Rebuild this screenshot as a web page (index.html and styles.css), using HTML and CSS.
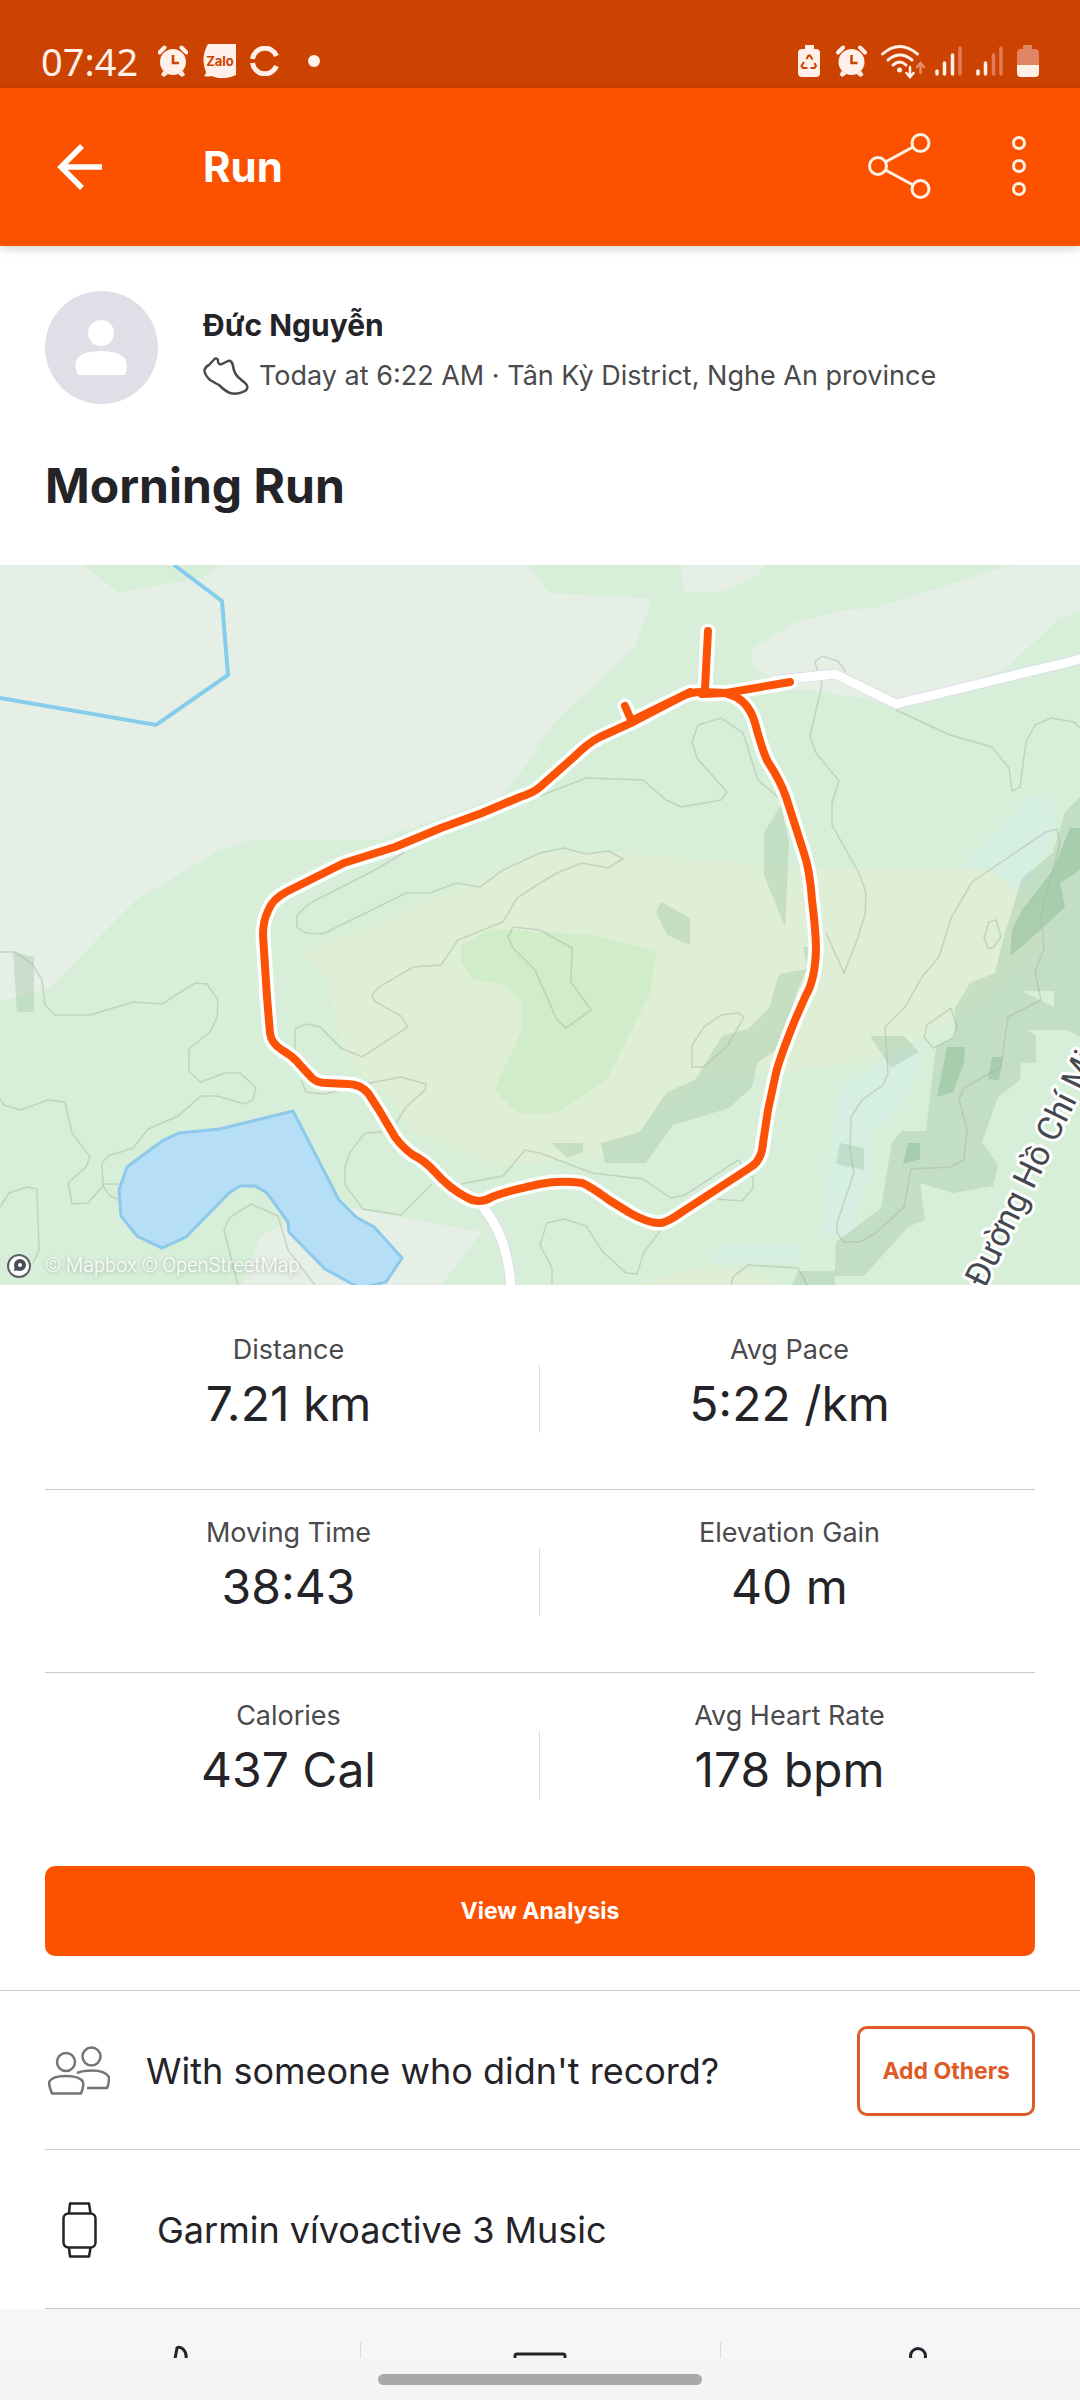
FILE: index.html
```html
<!DOCTYPE html>
<html lang="en">
<head>
    <meta charset="UTF-8">
    <meta name="viewport" content="width=device-width, initial-scale=1.0">
    <title>Morning Run</title>
    <link rel="stylesheet" href="styles.css">
</head>
<body>
    <div class="status-bar">
        <div class="status-group">
            <span class="clock">07:42</span>
            <svg width="30" height="32" viewBox="0 0 30 32">
                <g fill="#fff0ea">
                    <circle cx="15" cy="17" r="13"/>
                    <path d="M5 26l5 3-4 3-3-2zM25 26l-5 3 4 3 3-2z"/>
                </g>
                <path d="M1.500 7.500l5-5M28.500 7.500l-5-5" stroke="#fff0ea" stroke-width="4" stroke-linecap="round"/>
                <path d="M15 10v8h6" fill="none" stroke="#cc4200" stroke-width="2.5"/>
            </svg>
            <svg width="34" height="34" viewBox="0 0 34 34">
                <path d="M6 0h28v31q-14 6-24 1-4 1-8 0 2-2 2-4-6-14 2-28z" fill="#fff0ea"/>
                <text class="zalo" x="18" y="22" text-anchor="middle">Zalo</text>
            </svg>
            <svg width="30" height="30" viewBox="0 0 30 30" fill="none" stroke="#fff0ea" stroke-width="5">
                <path d="M2.500 13A12.500 12.500 0 0 1 26.500 10M2.500 17A12.500 12.500 0 0 0 26.500 20"/>
            </svg>
            <span class="status-dot"></span>
        </div>
        <div class="status-group">
            <svg width="24" height="32" viewBox="0 0 24 32">
                <path d="M7 0h9v4h2a4 4 0 0 1 4 4v20a4 4 0 0 1-4 4H4a4 4 0 0 1-4-4V8a4 4 0 0 1 4-4h3z" fill="#fff0ea"/>
                <path d="M8.500 14l2-3.500h1.500l2.500 4M16.500 18l1.500 3-1.500 2h-4M9.500 23H5l-1.500-2L6 17" fill="none" stroke="#cc4200" stroke-width="2"/>
            </svg>
            <svg width="31" height="32" viewBox="0 0 30 32">
                <g fill="#fff0ea">
                    <circle cx="15" cy="17" r="13"/>
                    <path d="M5 26l5 3-4 3-3-2zM25 26l-5 3 4 3 3-2z"/>
                </g>
                <path d="M1.500 7.500l5-5M28.500 7.500l-5-5" stroke="#fff0ea" stroke-width="4" stroke-linecap="round"/>
                <path d="M15 10v8h6" fill="none" stroke="#cc4200" stroke-width="2.5"/>
            </svg>
            <svg class="wifi" width="40" height="34" viewBox="0 0 40 34" fill="none" stroke="#fff0ea" stroke-width="3" stroke-linecap="round">
                <path d="M1.500 10q17-15 35 0M7 16q12-10 24 0M12 21q7-6 13 0"/>
                <circle cx="18.5" cy="26" r="2.5" fill="#fff0ea" stroke="none"/>
                <path d="M29 23v9M25.500 29l3.500 4 3.500-4" stroke-width="2.5"/>
                <path d="M39.500 29v-9M36 23l3.500-4 3.500 4" stroke="#e88a68" stroke-width="2.5"/>
            </svg>
            <svg width="27" height="32" viewBox="0 0 27 32" stroke="#fff0ea" stroke-width="3.5" stroke-linecap="round">
                <path d="M2 26v3M9.500 18v11M17.500 10v19"/>
                <path d="M25 3v26" stroke="#e27b57"/>
            </svg>
            <svg width="27" height="32" viewBox="0 0 27 32" stroke="#fff0ea" stroke-width="3.5" stroke-linecap="round">
                <path d="M2 26v3M9.500 18v11"/>
                <path d="M17.500 10v19M25 3v26" stroke="#e27b57"/>
            </svg>
            <svg width="22" height="32" viewBox="0 0 22 32">
                <path d="M6 0h9v4h3a4 4 0 0 1 4 4v12H0V8a4 4 0 0 1 4-4h2z" fill="#e08464"/>
                <path d="M0 20h22v8a4 4 0 0 1-4 4H4a4 4 0 0 1-4-4z" fill="#fff0ea"/>
            </svg>
        </div>
    </div>

    <header class="app-bar">
        <button class="icon-button" aria-label="Back">
            <svg width="45" height="46" viewBox="0 0 45 46" fill="none" stroke="#fff" stroke-width="5.5">
                <path d="M45 23H4M25 2L4 23l21 21"/>
            </svg>
        </button>
        <h1>Run</h1>
        <button class="icon-button share" aria-label="Share">
            <svg width="64" height="68" viewBox="0 0 64 68" fill="none" stroke="#fff3e6" stroke-width="3">
                <circle cx="52.5" cy="10" r="8.5"/>
                <circle cx="10" cy="33" r="8.5"/>
                <circle cx="52.5" cy="56" r="8.5"/>
                <path d="M17.500 29L45 14M17.500 37L45 52"/>
            </svg>
        </button>
        <button class="icon-button" aria-label="More options">
            <svg width="16" height="68" viewBox="0 0 16 68" fill="none" stroke="#fff3e6" stroke-width="3">
                <circle cx="8" cy="10" r="5.5"/>
                <circle cx="8" cy="33" r="5.5"/>
                <circle cx="8" cy="56" r="5.5"/>
            </svg>
        </button>
    </header>

    <main>
        <section class="summary">
            <div class="athlete">
                <svg class="avatar" width="113" height="113" viewBox="0 0 113 113">
                    <circle cx="56.5" cy="56.5" r="56.5" fill="#dfdfe8"/>
                    <circle cx="56" cy="42" r="13" fill="#fff"/>
                    <path d="M33 84q-4-8-2-14 4-10 25-10t25 10q2 6-1 14z" fill="#fff"/>
                </svg>
                <div class="athlete-info">
                    <p class="name">Đức Nguyễn</p>
                    <p class="meta">
                        <svg width="46" height="38" viewBox="0 0 46 38" fill="none" stroke="#4a4a4d" stroke-width="2.5" stroke-linejoin="round">
                            <path d="M12 1.500Q15 1 15 4 15 8 19 7L25 4Q29 3 30 9 31 16 35 20L42 26Q47 30 42 34 35 38 27 36 22 34 16 28 12 26 7 23 1 17 1.500 13 3 9 6 8z"/>
                        </svg>
                        <span>Today at 6:22 AM · Tân Kỳ District, Nghe An province</span>
                    </p>
                </div>
            </div>
            <h2>Morning Run</h2>
        </section>

        <svg class="map" viewBox="0 0 1080 720" role="img" aria-label="Route map">
            <rect width="1080" height="720" fill="#d7efd9"/>
            <g fill="#e5efe6">
                <path d="M0 0H527L540 15 549 28 650 33 648 45 635 82 555 157 540 177 530 195 503 230 379 275H253L220 285 136 335 96 375 52 422 0 437z"/>
                <path d="M680 0L685 27H721L759 10 764 0z"/>
                <path d="M1012 0L874 43 845 45 797 57 752 83V100L767 110 793 123 864 133 895 138 1005 105 1057 55 1080 45V0z"/>
                <path d="M351 643L482 667 441 720H243L260 672 282 660z"/>
            </g>
            <path d="M83 0L119 28 203 12 220 0z" fill="#d7efd9"/>
            <g fill="#d6efe3">
                <path d="M1032 230L1053 235 1056 262 1022 328 988 308 960 302z"/>
                <path d="M840 522L884 498 922 475 912 522 898 545 867 572 870 608 850 668 821 670 833 572z"/>
                <path d="M724 678L803 680 798 698H709z"/>
            </g>
            <path d="M300 388L345 370 430 335 540 288H623L760 299 822 303H984L1022 328 1040 342 1050 372 981 438 922 473 870 495 822 503 781 507 702 510 626 578 602 592 540 597 496 602 413 567 389 532 358 508 341 478 325 412z" fill="#dfefd6"/>
            <path d="M626 720L712 700 760 708 781 720z" fill="#dfefd6"/>
            <path d="M489 364L592 370 656 387 650 428 607 515 557 548H517L494 525 521 467 522 437 504 420 473 414 461 398V381z" fill="#d1ecc8"/>

            <!-- hill shading -->
            <g fill="#a5c6a8" fill-opacity=".42">
                <path d="M13 387L34 392V447H17z"/>
                <path d="M781 240L764 268V310L785 362 789 278z"/>
                <path d="M661 337L656 347 667 370 690 380V353z"/>
                <path d="M803 382H809L806 398z"/>
                <path d="M779 409L807 404 797 427 779 483 757 498 752 522 729 543 673 560 646 598H605L601 578 640 567 667 527 695 515 722 471 748 464 769 443z"/>
                <path d="M551 578H583V587L568 593z"/>
                <path d="M870 471H904L919 487 891 503z"/>
                <path d="M840 578L864 583V605L836 599z"/>
                <path fill-rule="evenodd" d="M1080 232L1065 247 1053 288 1022 313 1003 375 995 408 970 418 955 443V472L936 482 926 566H902L892 577 881 643 836 677 835 706H798L792 720H835V711H864L908 662 925 655 920 618 953 628 993 621 998 600 982 577 998 532 1020 515 1021 498H1036V471L1027 465H1067L1080 472zM1022 426H1054V442z"/>
            </g>
            <g fill="#7fb689" fill-opacity=".4">
                <path d="M947 482H965L964 498 953 527 937 532z"/>
                <path d="M992 492H1003L999 515 988 514z"/>
                <path d="M908 578H920V594L903 599z"/>
                <path d="M1080 263H1070L1053 305 1022 345 1012 365 1010 391 1037 368 1065 342 1060 318 1080 305z"/>
            </g>

            <!-- contour lines -->
            <g fill="none" stroke="#a9b8a6" stroke-opacity=".5" stroke-width="1.5">
                <path d="M405 287L375 305 310 338 297 350V362L306 368 323 369 406 328H430L456 318 480 322 503 305 540 288 564 283 586 289 609 286 623 294 608 303 582 298 557 308 540 318 517 333 503 357 458 375 441 400 413 402 379 422 372 430 374 436 401 451 408 462 362 492 341 483 320 462 306 459 295 464V487"/>
                <path d="M540 231L586 213 643 215 666 235 682 242 721 235 727 227 697 193 692 177 698 160 721 153 743 168 758 215 778 232"/>
                <path d="M846 107L838 96 822 91 815 97 822 120 810 171 816 188 839 216 832 238V260L860 310 866 328 865 350 857 375 844 408 826 368"/>
                <path d="M896 145L950 170 992 182 1009 203 1012 226 1020 222 1026 177 1035 160 1051 153 1074 157 1080 163"/>
                <path d="M1057 264L1046 267 972 317 951 353 939 392 922 412 905 442 885 462 888 508 883 520 862 535 851 552 850 585 854 608 837 658V668L844 677H860L876 668 904 642 911 604 950 602 964 595 967 565 959 534 964 523 1001 502 1008 452 1041 435 1035 407 1044 383 1041 350 1060 278z"/>
                <path d="M951 443L927 460 924 472 933 483 953 473 957 462z"/>
                <path d="M996 355L989 357 984 373 988 383H993L1001 372z"/>
                <path d="M721 450L738 448 744 452 728 480 704 502H692V480L704 462z"/>
                <path d="M540 365L513 362 508 372 513 383 535 405 557 455 566 463 591 445 571 417 572 383z"/>
                <path d="M0 387H15L33 400 42 415 45 440 55 450H90L133 437 162 439 195 418 207 419 218 435 217 452 211 466 189 484V507L201 517 225 508H240L256 523 253 535 244 539 217 531H201L178 551 148 564 133 583 108 591 102 598 103 621 88 638 72 639 68 618 86 602 90 592 72 568 65 537 48 535 21 545 4 540 0 534"/>
                <path d="M103 621L110 631 118 634M103 619H119M0 642L9 628 27 622 37 624 39 685 33 698"/>
                <path d="M238 720L224 665 229 653 251 639 278 651 288 685 315 720"/>
                <path d="M382 567L365 568 350 587 345 602V620L363 644 401 650 432 619M461 619L503 611 525 585 540 588 592 608 643 614 671 633 685 630 738 595 753 613V623L742 636 717 634"/>
                <path d="M301 515L306 527 324 529 370 518 401 512 426 519 425 525 406 542 396 558"/>
                <path d="M552 720V703L540 680 547 658 564 654 586 661 603 687 626 708 637 709 644 687 661 665"/>
                <path d="M731 720L733 712 748 700 798 703 807 720"/>
            </g>

            <!-- water -->
            <path d="M174 0L222 36 228 110 156 160 0 133" fill="none" stroke="#86cdeb" stroke-width="4"/>
            <path d="M293 546L339 635 356 652 374 662 402 693 386 717 365 722H358L325 704 289 667 288 657 267 628 255 621H240L229 628 186 672 162 683 137 671 121 651 119 625 127 602 162 576 179 568 220 564z" fill="#b6dff7" stroke="#8dc9ea" stroke-width="3"/>

            <!-- roads -->
            <g fill="none" stroke-linejoin="round">
                <path d="M780 115L835 109 896 139 1077 95 1082 93M479 636L492 655Q508 680 511 722" stroke="#dcdfe8" stroke-width="11"/>
                <path d="M780 115L835 109 896 139 1077 95 1082 93M479 636L492 655Q508 680 511 722" stroke="#fff" stroke-width="9"/>
            </g>

            <!-- activity route -->
            <defs>
                <g id="route">
                    <path d="M726 128L702 127Q690 127 681 132L633 157 600 172Q588 178 575 191L540 222Q533 228 520 232L482 248 441 263 395 282 344 298 288 326Q272 334 268 346 263 356 263 370L267 432 270 468Q271 478 282 485 294 492 300 500L312 513Q317 518 326 518L348 519Q360 519 368 528L379 545 395 572Q403 583 413 590 424 595 434 606 450 624 466 632 479 640 492 632 503 627 540 619 560 615 582 618 590 621 609 635L630 648Q650 659 661 658 668 657 682 647L751 602Q762 595 763 578L768 545 776 508Q780 492 795 455L806 430Q815 415 816 385 816 368 812 335 810 305 803 285L786 232Q780 215 768 197 763 188 755 158 748 134 728 129"/>
                    <path d="M705 124L708 66M702 129L726 128 790 117M633 155L690 127M632 157L625 141"/>
                </g>
            </defs>
            <g fill="none" stroke-linecap="round" stroke-linejoin="round">
                <use href="#route" stroke="#fff" stroke-width="15"/>
                <use href="#route" stroke="#fc5205" stroke-width="8"/>
            </g>

            <text class="road-label" transform="translate(985 724) rotate(-64)">Đường Hồ Chí Minh</text>

            <circle cx="19" cy="701" r="11" fill="#fff" stroke="#5b6066" stroke-width="2"/>
            <circle cx="20" cy="700" r="4" fill="#fff" stroke="#4a4f55" stroke-width="4"/>
            <path d="M14 706l1-6 5 5z" fill="#4a4f55"/>
            <text class="attribution" x="45" y="707">© Mapbox © OpenStreetMap</text>
        </svg>

        <section class="stats">
            <div class="stat-row">
                <div class="stat">
                    <span class="label">Distance</span>
                    <span class="value">7.21 km</span>
                </div>
                <div class="stat">
                    <span class="label">Avg Pace</span>
                    <span class="value">5:22 /km</span>
                </div>
            </div>
            <div class="stat-row">
                <div class="stat">
                    <span class="label">Moving Time</span>
                    <span class="value">38:43</span>
                </div>
                <div class="stat">
                    <span class="label">Elevation Gain</span>
                    <span class="value">40 m</span>
                </div>
            </div>
            <div class="stat-row">
                <div class="stat">
                    <span class="label">Calories</span>
                    <span class="value">437 Cal</span>
                </div>
                <div class="stat">
                    <span class="label">Avg Heart Rate</span>
                    <span class="value">178 bpm</span>
                </div>
            </div>
            <button class="btn btn-primary">View Analysis</button>
        </section>

        <section class="details">
            <div class="detail-row others">
                <svg width="62" height="50" viewBox="0 0 62 50" fill="none" stroke="#74747a" stroke-width="2.5" stroke-linejoin="round">
                    <circle cx="18" cy="16" r="9"/>
                    <circle cx="43.5" cy="10.5" r="9"/>
                    <path d="M4 47.500Q1 41 1 36 4 30 18 30T35 36Q36 41 33 47.500zM29 27Q35 24.500 44 24.500 57 24.500 61 31 61 38 59 42H39"/>
                </svg>
                <span class="detail-text">With someone who didn't record?</span>
                <button class="btn btn-outline">Add Others</button>
            </div>
            <div class="detail-row device">
                <svg width="36" height="56" viewBox="0 0 36 56" fill="none" stroke="#242428" stroke-width="2.5" stroke-linejoin="round">
                    <rect x="1.5" y="11.5" width="32" height="34" rx="5"/>
                    <path d="M7 11L8 1.500H27L28.500 11M7 46L8 54.500H27L28.500 46"/>
                </svg>
                <span class="detail-text">Garmin vívoactive 3 Music</span>
            </div>
        </section>
    </main>

    <nav class="actions">
        <button aria-label="Give kudos">
            <svg width="60" height="60" viewBox="0 0 60 60" fill="none" stroke="#242428" stroke-width="3">
                <path d="M25 15L27 4Q29 2 33 5 37 9 36 15V24H50V50H16V28z"/>
            </svg>
        </button>
        <button aria-label="Comment">
            <svg width="60" height="60" viewBox="0 0 60 60" fill="none" stroke="#242428" stroke-width="3">
                <rect x="4" y="10" width="50" height="36" rx="2"/>
            </svg>
        </button>
        <button aria-label="Share activity">
            <svg width="60" height="60" viewBox="0 0 60 60" fill="none" stroke="#242428" stroke-width="3">
                <circle cx="47" cy="12" r="7.5"/>
                <circle cx="14" cy="30" r="7.5"/>
                <circle cx="47" cy="48" r="7.5"/>
            </svg>
        </button>
    </nav>
    <div class="gesture-bar"><span></span></div>
</body>
</html>
```
FILE: styles.css
```css
* { box-sizing: border-box; }
body { margin: 0; min-height: 100vh; display: flex; flex-direction: column; background-color: #fff; color: #242428; font-family: Inter, "Liberation Sans", sans-serif; font-weight: 400; }
h1, h2, p { margin: 0; }
svg { display: block; flex-shrink: 0; }
button { font-family: inherit; cursor: pointer; }

/* System status bar */
.status-bar { display: flex; justify-content: space-between; align-items: center; height: 88px; padding: 34px 41px 0; background-color: #cc4200; }
.status-group { display: flex; align-items: center; gap: 14px; }
.clock { font-family: "Noto Sans", sans-serif; font-size: 38px; line-height: 40px; color: #fff0ea; margin-right: 6px; }
.zalo { font-family: Inter, sans-serif; font-size: 13px; font-weight: 700; fill: #cc4200; }
.status-dot { width: 12px; height: 12px; margin-left: 14px; border-radius: 50%; background-color: #fff0ea; }
.wifi { overflow: visible; }

/* App bar */
.app-bar { position: relative; display: flex; align-items: center; height: 158px; padding: 0 53px 0 57px; background-color: #fc5200; color: #fff; box-shadow: 0 2px 10px rgba(0,0,0,0.2); }
.app-bar h1 { margin-left: 101px; font-size: 42px; line-height: 52px; font-weight: 700; }
.icon-button { padding: 0; border: none; background: none; }
.icon-button.share { margin-left: auto; margin-right: 79px; }

/* Athlete and title */
.summary { padding: 45px 45px 47px; }
.athlete { display: flex; align-items: center; gap: 45px; }
.athlete-info { min-width: 0; padding-top: 4px; }
.name { font-size: 30px; line-height: 52px; font-weight: 700; }
.meta { display: flex; align-items: center; gap: 10px; font-size: 27px; line-height: 50px; color: #4a4a4d; }
.summary h2 { margin-top: 50px; font-size: 48px; line-height: 64px; font-weight: 700; }

/* Map */
.map { width: 100%; height: auto; }
.road-label { font-family: Roboto, sans-serif; font-size: 34px; font-weight: 400; fill: #44484f; stroke: #fff; stroke-width: 6px; stroke-linejoin: round; paint-order: stroke; }
.attribution { font-family: Roboto, sans-serif; font-size: 20px; font-weight: 300; fill: #fff; text-shadow: 0 1px 4px rgba(0,0,0,0.3); }

/* Stats */
.stats { padding: 22px 45px 34px; }
.stat-row { position: relative; display: grid; grid-template-columns: 1fr 1fr; padding: 24px 0 50px; border-bottom: 1px solid #c9c9cb; }
.stat-row:nth-child(3) { border-bottom: none; }
.stat-row::after { content: ""; position: absolute; left: calc(50% - 1px); top: 58px; width: 1px; height: 68px; background-color: #dcdcde; }
.stat { display: flex; flex-direction: column; align-items: center; padding-left: 4px; }
.stat:first-child { padding: 0 8px 0 0; }
.label { font-size: 27px; line-height: 38px; color: #4a4a4d; }
.value { font-size: 48px; line-height: 70px; }

.btn { height: 90px; padding: 0 20px; border-radius: 10px; font-size: 23px; font-weight: 700; }
.btn-primary { display: block; width: 100%; margin-top: 11px; border: none; background-color: #fc5200; color: #fff; }
.btn-outline { margin-left: auto; padding: 0 22px; border: 3px solid #de5a26; background-color: #fff; color: #de5a26; }

/* Details */
.details { border-top: 1px solid #c9c9cb; }
.detail-row { position: relative; display: flex; align-items: center; height: 159px; padding-right: 45px; }
.detail-row::after { content: ""; position: absolute; left: 45px; right: 0; bottom: 0; height: 1px; background-color: #c9c9cb; }
.detail-text { font-size: 36px; line-height: 48px; }
.others { padding-left: 48px; gap: 36px; }
.device { padding-left: 62px; gap: 59px; }

/* Bottom actions, partly under the gesture bar */
.actions { display: grid; grid-template-columns: repeat(3, 1fr); height: 49px; overflow: hidden; background-color: #f6f6f9; }
.actions button { display: flex; justify-content: center; height: 120px; margin-top: 33px; padding: 2px 0 0; border: none; background: none; }
.actions button + button { border-left: 1px solid #dcdce0; }
.gesture-bar { display: flex; justify-content: center; flex-grow: 1; padding: 16px 0 14px; background-color: #f5f5f5; }
.gesture-bar span { width: 30%; height: 11px; border-radius: 6px; background-color: #a9a9a9; }
```
